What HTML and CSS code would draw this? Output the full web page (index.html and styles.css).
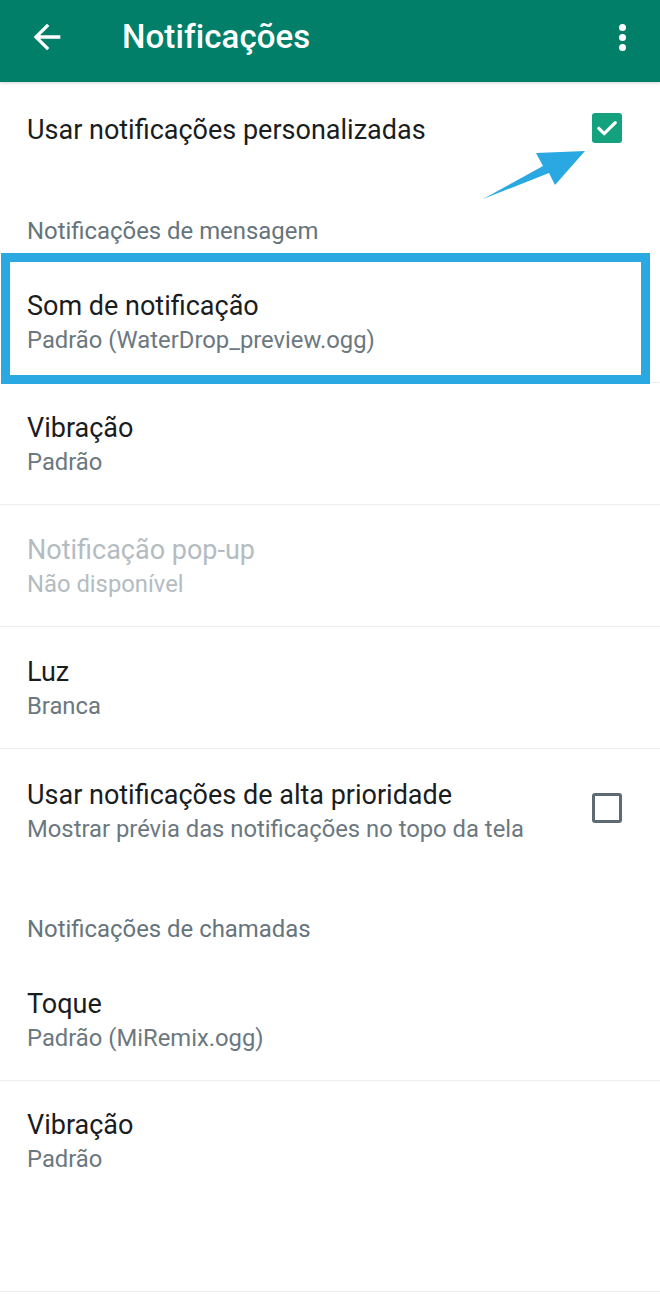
FILE: index.html
```html
<!DOCTYPE html>
<html lang="pt-BR">
<head>
<meta charset="utf-8">
<title>Notificações</title>
<link rel="stylesheet" href="styles.css">
</head>
<body>
<div class="screen">
  <header class="appbar">
    <button class="icon-btn back" aria-label="Voltar">
      <svg viewBox="0 0 24 24" width="40" height="40"><path fill="#fff" d="M20 11H7.83l5.59-5.59L12 4l-8 8 8 8 1.41-1.41L7.83 13H20v-2z"/></svg>
    </button>
    <h1 class="appbar-title">Notificações</h1>
    <button class="icon-btn more" aria-label="Mais opções">
      <span class="dot"></span><span class="dot"></span><span class="dot"></span>
    </button>
  </header>

  <main class="prefs">
    <div class="pref switch-pref first">
      <div class="pref-text">
        <div class="pref-title">Usar notificações personalizadas</div>
      </div>
      <span class="checkbox checked">
        <svg viewBox="0 0 30 30" width="30" height="30"><path d="M6.8 15.3l5.4 5.4L23.3 9.6" fill="none" stroke="#fff" stroke-width="3.2" stroke-linecap="round" stroke-linejoin="round"/></svg>
      </span>
      <svg class="pointer-arrow" viewBox="0 0 104 56" width="104" height="56" aria-hidden="true">
        <polygon fill="#29a8e1" points="1,53 61,20 54,7 103,5 73,39 67,27"/>
      </svg>
    </div>

    <div class="category first-cat">Notificações de mensagem</div>

    <div class="pref highlighted">
      <div class="pref-text">
        <div class="pref-title">Som de notificação</div>
        <div class="pref-summary">Padrão (WaterDrop_preview.ogg)</div>
      </div>
      <span class="highlight-box" aria-hidden="true"></span>
    </div>

    <div class="pref">
      <div class="pref-text">
        <div class="pref-title">Vibração</div>
        <div class="pref-summary">Padrão</div>
      </div>
    </div>

    <div class="pref disabled">
      <div class="pref-text">
        <div class="pref-title">Notificação pop-up</div>
        <div class="pref-summary">Não disponível</div>
      </div>
    </div>

    <div class="pref">
      <div class="pref-text">
        <div class="pref-title">Luz</div>
        <div class="pref-summary">Branca</div>
      </div>
    </div>

    <div class="pref switch-pref tall no-border">
      <div class="pref-text">
        <div class="pref-title">Usar notificações de alta prioridade</div>
        <div class="pref-summary">Mostrar prévia das notificações no topo da tela</div>
      </div>
      <span class="checkbox"></span>
    </div>

    <div class="category">Notificações de chamadas</div>

    <div class="pref">
      <div class="pref-text">
        <div class="pref-title">Toque</div>
        <div class="pref-summary">Padrão (MiRemix.ogg)</div>
      </div>
    </div>

    <div class="pref last">
      <div class="pref-text">
        <div class="pref-title">Vibração</div>
        <div class="pref-summary">Padrão</div>
      </div>
    </div>
  </main>
</div>
</body>
</html>
```

FILE: styles.css
```css
* { box-sizing: border-box; }

html, body {
  margin: 0;
  padding: 0;
  background: #ffffff;
}

body {
  font-family: Roboto, "Noto Sans", "Liberation Sans", sans-serif;
  color: #1b1d1f;
  width: 660px;
  height: 1303px;
  overflow: hidden;
}

.screen {
  width: 660px;
  height: 1303px;
  background: #fff;
}

/* App bar */
.appbar {
  height: 82px;
  background: #017f69;
  display: flex;
  align-items: center;
  position: relative;
  z-index: 2;
  box-shadow: 0 1px 3px rgba(0, 0, 0, 0.18);
}

.icon-btn {
  border: 0;
  background: none;
  padding: 0;
  margin: 0;
  display: flex;
  align-items: center;
  justify-content: center;
  cursor: pointer;
}

.back {
  width: 40px;
  height: 40px;
  margin-left: 27px;
  margin-top: -8px;
}

.back svg { display: block; }

.appbar-title {
  margin: 0 0 0 55px;
  flex: 1;
  color: #ffffff;
  font-size: 33px;
  font-weight: 500;
  line-height: 40px;
  margin-top: -8px;
  letter-spacing: 0.1px;
}

.more {
  width: 20px;
  height: 40px;
  margin-right: 28px;
  margin-top: -8px;
  flex-direction: column;
  gap: 3px;
}

.dot {
  width: 7px;
  height: 7px;
  border-radius: 50%;
  background: #fff;
}

/* Preferences */
.prefs {
  display: flex;
  flex-direction: column;
}

.pref {
  position: relative;
  display: flex;
  align-items: flex-start;
  height: 122px;
  padding: 28px 38px 0 27px;
  border-bottom: 1px solid #eceeef;
}

.pref.no-border { border-bottom: 0; }

.pref.tall { height: 147px; padding-top: 29px; }

.pref.last { height: 211px; padding-top: 27px; }

.pref.first {
  height: 116px;
  padding-top: 31px;
  border-bottom: 0;
}

.pref-text {
  flex: 1;
  min-width: 0;
}

.pref-title {
  font-size: 27px;
  line-height: 34px;
  color: #1a1c1e;
}

.pref-summary {
  font-size: 23.8px;
  line-height: 34px;
  color: #6c7880;
}

.pref.disabled .pref-title { color: #b4bcc1; }
.pref.disabled .pref-summary { color: #b4bcc1; }

/* Category headers */
.category {
  height: 63px;
  padding: 18px 27px 0;
  font-size: 23.9px;
  line-height: 30px;
  color: #66747c;
}

.category.first-cat { height: 63px; }

/* Checkboxes */
.checkbox {
  flex: none;
  width: 30px;
  height: 30px;
  border-radius: 3px;
  border: 3px solid #5f6b73;
  display: flex;
  align-items: center;
  justify-content: center;
  margin-top: 15px;
}

.switch-pref.first .checkbox { margin-top: 0; }

.checkbox.checked {
  background: #13a27d;
  border: 0;
}

.checkbox.checked svg { display: block; }

/* Annotation overlays */
.pointer-arrow {
  position: absolute;
  left: 482px;
  top: 64px;
}

.highlight-box {
  position: absolute;
  left: 1px;
  right: 10px;
  top: -8px;
  bottom: -2px;
  border: 9px solid #29a8e1;
  pointer-events: none;
}
```
